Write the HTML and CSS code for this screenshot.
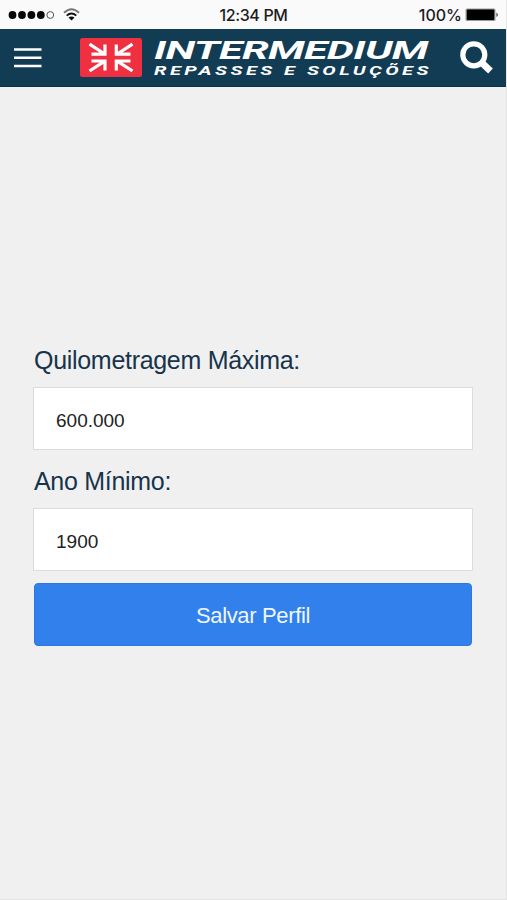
FILE: index.html
```html
<!DOCTYPE html>
<html lang="pt-BR">
<head>
<meta charset="utf-8">
<meta name="viewport" content="width=device-width, initial-scale=1">
<title>Intermedium</title>
<link rel="stylesheet" href="styles.css">
</head>
<body>
<div class="screen">
  <div class="status">
    <svg class="signal" width="74" height="16" viewBox="0 0 74 16">
      <g fill="#080808"><circle cx="4.5" cy="8" r="3.9"/><circle cx="14" cy="8" r="3.9"/><circle cx="23.4" cy="8" r="3.9"/><circle cx="32.8" cy="8" r="3.9"/></g>
      <circle cx="42.3" cy="8" r="3.4" fill="none" stroke="#555" stroke-width="1"/>
      <g fill="none" stroke-width="1.9"><path d="M56 5.8Q63.5-1.2 71 5.8" stroke="#777"/><path d="M58.7 8.6Q63.5 4.3 68.3 8.6" stroke="#111"/></g>
      <path d="M60.5 10.6Q63.5 8.2 66.5 10.6L63.5 13.6Z" fill="#080808"/>
    </svg>
    <span class="time">12:34 PM</span>
    <div class="power"><span>100%</span>
      <svg width="34" height="14" viewBox="0 0 34 14"><rect x=".5" y=".5" width="30" height="12.5" rx="1.5" fill="#999"/><rect x="1.8" y="1.5" width="27.5" height="10.5" rx="1" fill="#000"/><path d="M31.5 4.5Q34 6.8 31.5 9Z" fill="#222"/></svg>
    </div>
  </div>
  <header class="bar">
    <svg class="menu" width="28" height="20" viewBox="0 0 28 20"><path d="M0 1.5H27.5M0 9.8H27.5M0 18H27.5" stroke="#fff" stroke-width="2.5"/></svg>
    <svg class="logo" width="352" height="42" viewBox="0 0 352 42">
      <rect x="0" y="1" width="62" height="39" rx="2.5" fill="#ee3040"/>
      <g fill="none" stroke="#fff" stroke-width="3.2">
        <path d="M9.5 7.2L24 16.5M25 7.5V17.2H11.5"/>
        <path d="M52.5 7.2L38 16.5M36.3 7.5V17.2H50.5"/>
        <path d="M9.5 34L24 24.7M25 33.5V24H11.5"/>
        <path d="M52.5 34L38 24.7M36.3 33.5V24H50.5"/>
      </g>
      <text class="brand" transform="translate(74 21.5) scale(1.72 1)" textLength="159.5" lengthAdjust="spacing">INTERMEDIUM</text>
      <text class="tagline" transform="translate(74 37.7) scale(1.6 1)" textLength="171.5" lengthAdjust="spacing">REPASSES E SOLUÇÕES</text>
    </svg>
    <svg class="search" width="34" height="34" viewBox="0 0 34 34"><circle cx="13.8" cy="13.8" r="11" fill="none" stroke="#fff" stroke-width="5.2"/><path d="M21.5 21.5L30.5 30" stroke="#fff" stroke-width="6.8"/></svg>
  </header>
  <form class="profile">
    <label for="km">Quilometragem Máxima:</label>
    <input id="km" type="text" value="600.000">
    <label for="year">Ano Mínimo:</label>
    <input id="year" type="text" value="1900">
    <button type="button">Salvar Perfil</button>
  </form>
</div>
</body>
</html>
```
FILE: styles.css
```css
* { box-sizing: border-box; }
body {
  margin: 0;
  background: #f0f0f0;
  font-family: "Liberation Sans", Arial, sans-serif;
}
.screen {
  height: 900px;
  border-right: 1px solid #e6e6e6;
  border-bottom: 1px solid #e2e2e2;
  overflow: hidden;
}
.status {
  display: grid;
  grid-template-columns: 1fr auto 1fr;
  align-items: center;
  height: 29px;
  padding: 1px 7px 0 8px;
  background: #fafafb;
  color: #1c1c1c;
  font: 500 16px/20px Inter, sans-serif;
}
.time { letter-spacing: -0.35px; }
.power {
  display: flex;
  justify-content: flex-end;
  align-items: center;
  gap: 3px;
}
.bar {
  display: flex;
  align-items: center;
  height: 58px;
  padding: 0 12px 0 14px;
  background: #123c54;
  border-bottom: 1px solid #0b3047;
}
.logo {
  margin-left: 38px;
  overflow: visible;
}
.search { margin-left: auto; }
.brand {
  fill: #fff;
  font: italic 700 25px Roboto, sans-serif;
}
.tagline {
  fill: #fff;
  font: italic 700 12.5px Roboto, sans-serif;
}
.profile {
  display: flex;
  flex-direction: column;
  padding: 257px 33px 0;
}
.profile label {
  height: 43px;
  padding-left: 1px;
  color: #17344b;
  font-size: 25px;
  line-height: 33px;
  letter-spacing: -0.3px;
}
.profile input {
  height: 63px;
  margin-bottom: 15px;
  padding: 4px 22px 0;
  border: 1px solid #dcdcdc;
  border-radius: 0;
  background: #fff;
  color: #222;
  font: 19px "Liberation Sans", Arial, sans-serif;
}
.profile button {
  height: 63px;
  margin: -3px 1px 0;
  padding: 3px 0 0;
  border: 1px solid #2b79e0;
  border-radius: 4px;
  background: #3280ec;
  color: #eef6ff;
  font: 22px "Liberation Sans", Arial, sans-serif;
  letter-spacing: -0.35px;
}
```
